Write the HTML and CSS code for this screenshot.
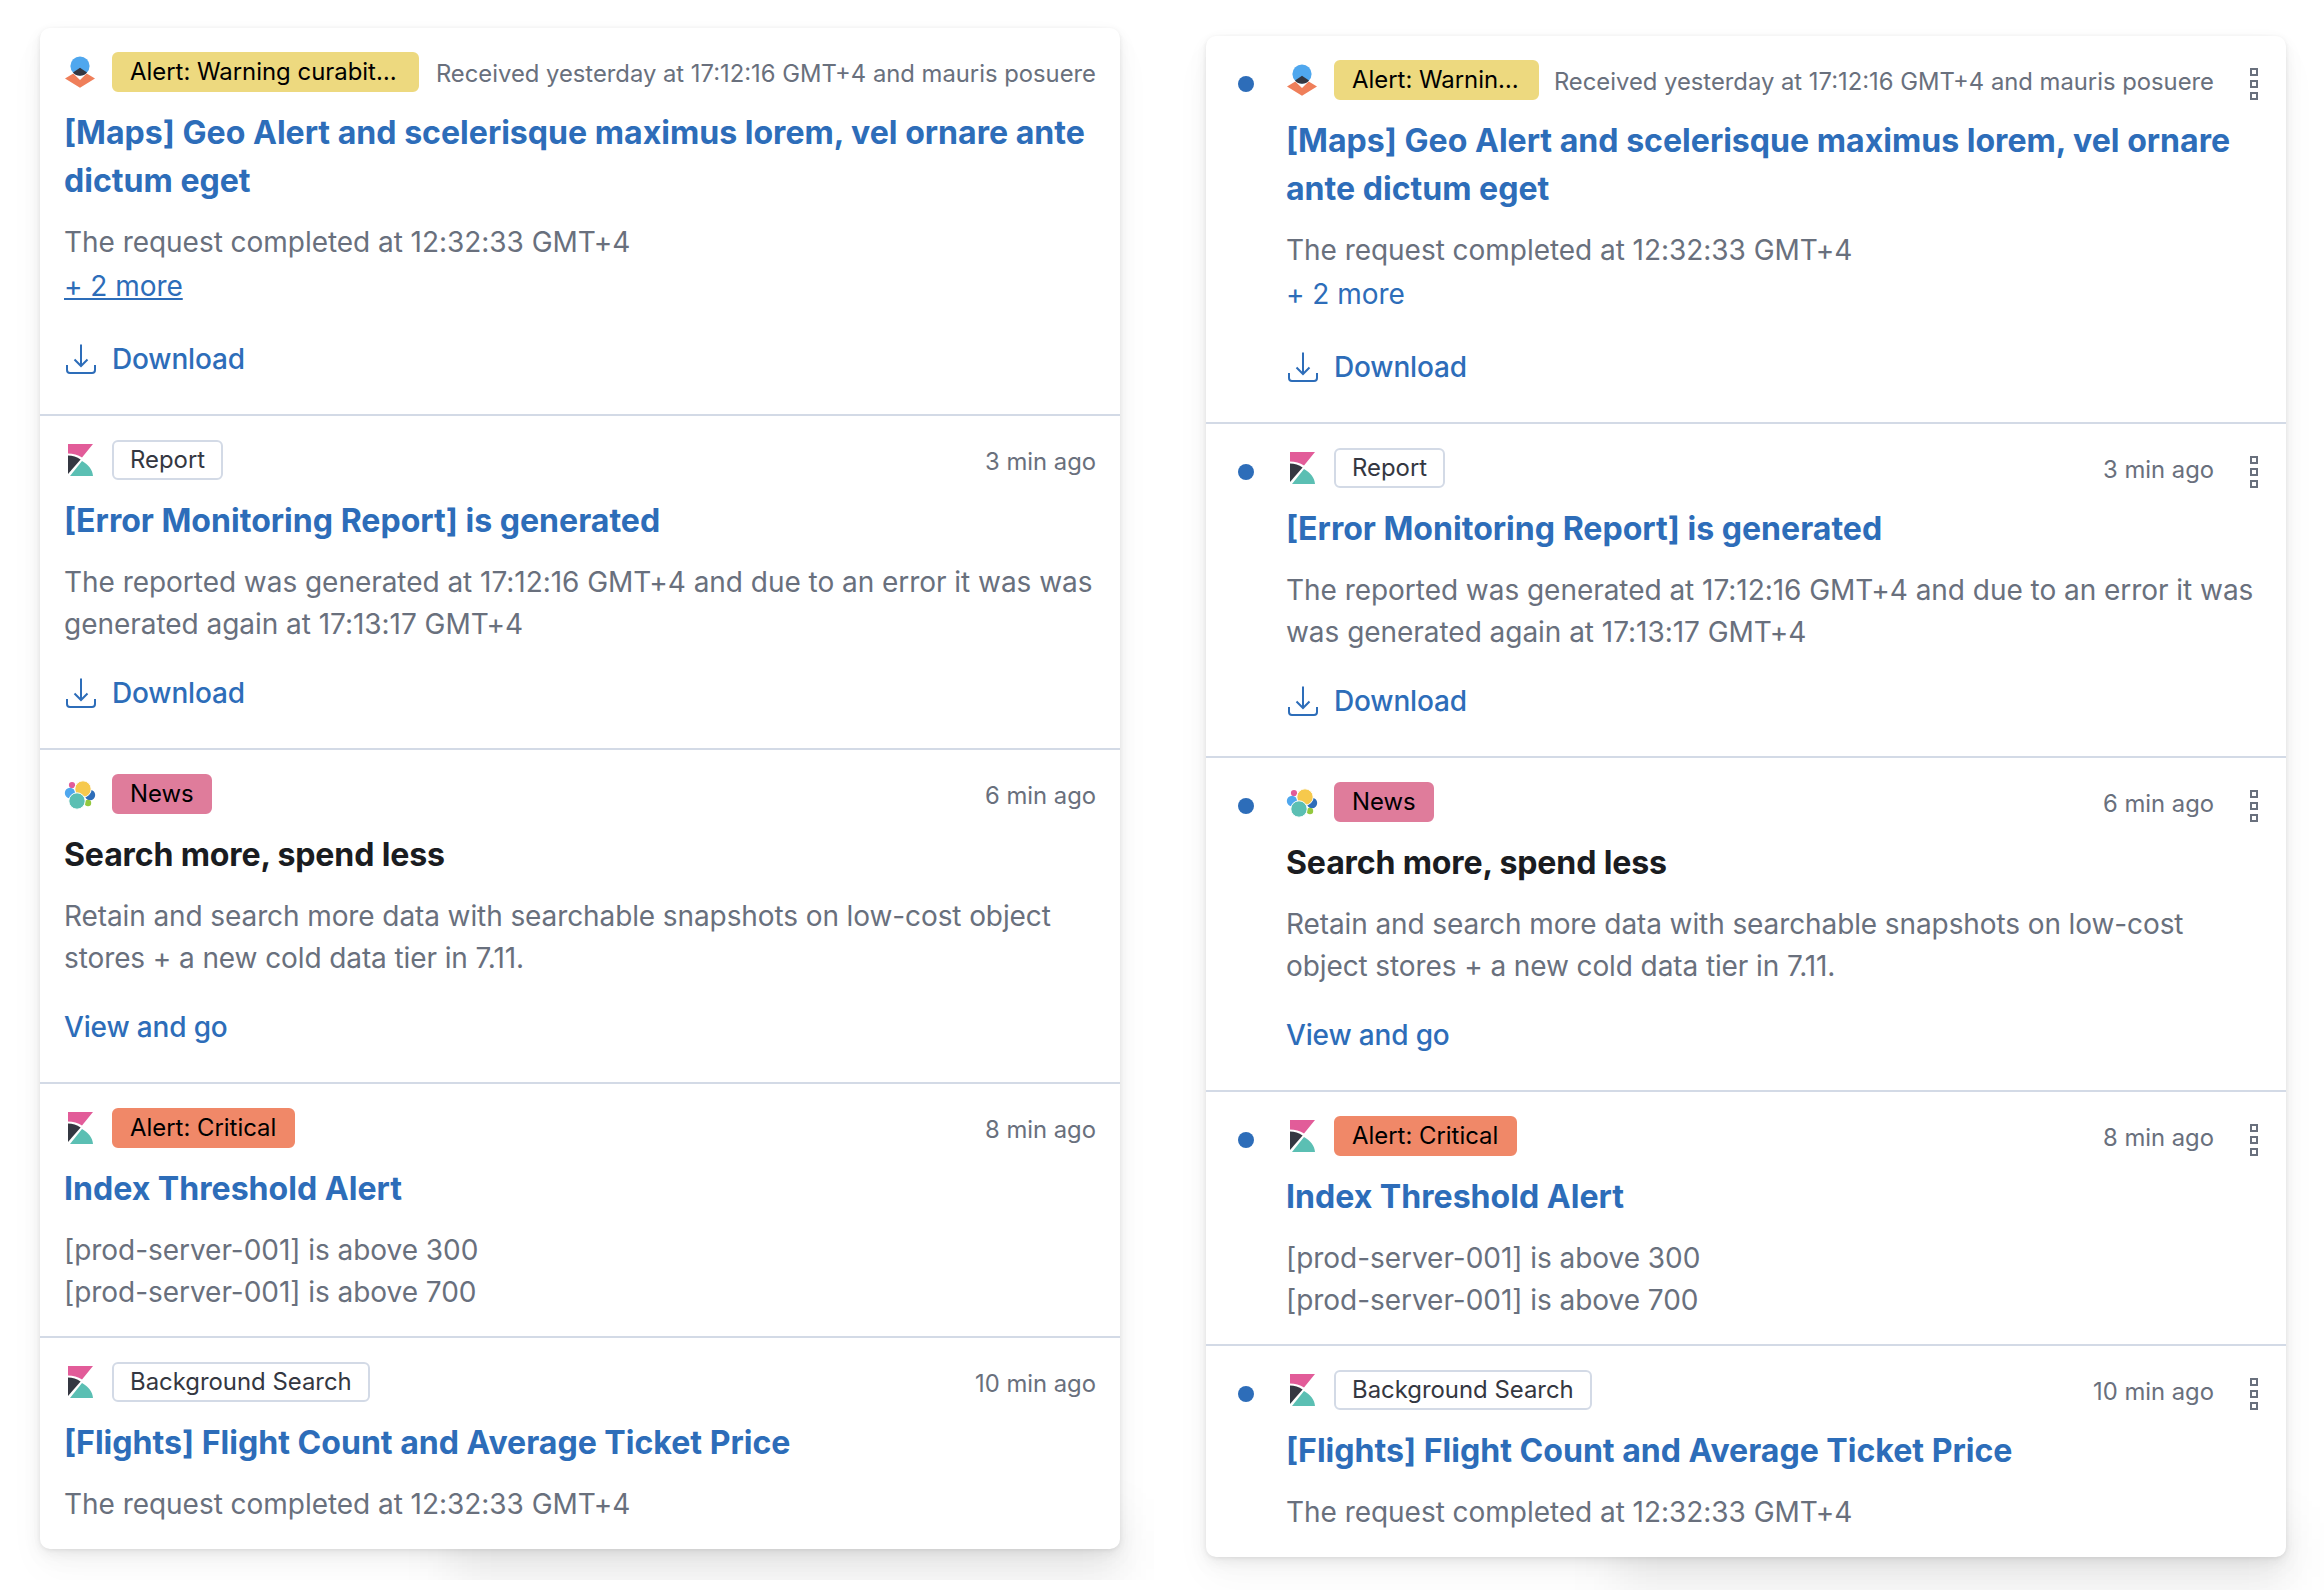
FILE: index.html
```html
<!DOCTYPE html>
<html lang="en">
<head>
<meta charset="utf-8">
<title>Notifications</title>
<link rel="stylesheet" href="styles.css">
</head>
<body>
<svg class="defs" width="0" height="0" aria-hidden="true">
  <defs>
    <symbol id="logo-maps" viewBox="0 0 32 40">
      <circle cx="16" cy="14" r="9.6" fill="#4fa7ee"/>
      <path d="M16 15.8 9 20.4C10.8 22.6 13.2 23.7 16 23.7S21.2 22.6 23 20.4Z" fill="#343741"/>
      <path d="M9.3 21.4 16 28 22.7 21.4 31 26.4 16 35.8 1 26.4Z" fill="#ef7f5a"/>
    </symbol>
    <symbol id="logo-kibana" viewBox="0 0 32 40">
      <path d="M4 4H29L18 17.5C14 15 9 13.5 4 13.5Z" fill="#e25c99"/>
      <path d="M4 15.5C8.5 15.5 13 16.8 16.6 19.5L4 34Z" fill="#343741"/>
      <path d="M6 36 18 21C24.500 24.500 28.500 30 29 36Z" fill="#5bbfb3"/>
    </symbol>
    <symbol id="logo-elastic" viewBox="0 0 32 40">
      <circle cx="8" cy="11" r="3.100" fill="#e25c99"/>
      <circle cx="6" cy="19" r="5.200" fill="#4fa7ee"/>
      <circle cx="26" cy="21" r="5.200" fill="#2d6db9"/>
      <circle cx="24" cy="29" r="3.200" fill="#93c83e"/>
      <circle cx="19" cy="15" r="8.200" fill="#f6c94c" stroke="#fff"/>
      <circle cx="13" cy="27" r="8.200" fill="#5bbfb3" stroke="#fff"/>
    </symbol>
    <symbol id="icon-download" viewBox="0 0 32 32">
      <path d="M17 1.500V23M10.500 16.500 17 23l6.500-6.500M3 22v5a3 3 0 0 0 3 3h22a3 3 0 0 0 3-3v-5" fill="none" stroke="currentColor" stroke-width="2"/>
    </symbol>
    <symbol id="icon-more" viewBox="0 0 8 32">
      <path d="M1 1h6v6H1zM1 13h6v6H1zM1 25h6v6H1z" fill="none" stroke="currentColor" stroke-width="2"/>
    </symbol>
  </defs>
</svg>

<main class="stage">
  <section class="panel panel--plain">
    <div class="card">
      <article class="item item--tall">
        <div class="item__main">
          <header class="item__head">
            <svg class="logo"><use href="#logo-maps"/></svg>
            <span class="badge badge--warning">Alert: Warning curabit…</span>
            <span class="time">Received yesterday at 17:12:16 GMT+4 and mauris posuere</span>
          </header>
          <h3 class="title"><a class="title__link">[Maps] Geo Alert and scelerisque maximus lorem, vel ornare ante dictum eget</a></h3>
          <p class="body">The request completed at 12:32:33 GMT+4</p>
          <a class="more more--underlined">+ 2 more</a>
          <a class="action"><svg class="action__icon"><use href="#icon-download"/></svg>Download</a>
        </div>
      </article>
      <article class="item">
        <div class="item__main">
          <header class="item__head">
            <svg class="logo"><use href="#logo-kibana"/></svg>
            <span class="badge badge--hollow">Report</span>
            <span class="time">3 min ago</span>
          </header>
          <h3 class="title"><a class="title__link">[Error Monitoring Report] is generated</a></h3>
          <p class="body">The reported was generated at 17:12:16 GMT+4 and due to an error it was was generated again at 17:13:17 GMT+4</p>
          <a class="action"><svg class="action__icon"><use href="#icon-download"/></svg>Download</a>
        </div>
      </article>
      <article class="item">
        <div class="item__main">
          <header class="item__head">
            <svg class="logo"><use href="#logo-elastic"/></svg>
            <span class="badge badge--news">News</span>
            <span class="time">6 min ago</span>
          </header>
          <h3 class="title title--dark">Search more, spend less</h3>
          <p class="body body--tight">Retain and search more data with searchable snapshots on low-cost object stores + a new cold data tier in 7.11.</p>
          <a class="action">View and go</a>
        </div>
      </article>
      <article class="item item--short">
        <div class="item__main">
          <header class="item__head">
            <svg class="logo"><use href="#logo-kibana"/></svg>
            <span class="badge badge--critical">Alert: Critical</span>
            <span class="time">8 min ago</span>
          </header>
          <h3 class="title"><a class="title__link">Index Threshold Alert</a></h3>
          <p class="body">[prod-server-001] is above 300<br>[prod-server-001] is above 700</p>
        </div>
      </article>
      <article class="item item--short item--last">
        <div class="item__main">
          <header class="item__head">
            <svg class="logo"><use href="#logo-kibana"/></svg>
            <span class="badge badge--hollow">Background Search</span>
            <span class="time">10 min ago</span>
          </header>
          <h3 class="title"><a class="title__link">[Flights] Flight Count and Average Ticket Price</a></h3>
          <p class="body">The request completed at 12:32:33 GMT+4</p>
        </div>
      </article>
    </div>
  </section>

  <section class="panel panel--unread">
    <div class="card">
      <article class="item item--tall">
        <span class="dot"></span>
        <div class="item__main">
          <header class="item__head">
            <svg class="logo"><use href="#logo-maps"/></svg>
            <span class="badge badge--warning">Alert: Warnin…</span>
            <span class="time">Received yesterday at 17:12:16 GMT+4 and mauris posuere</span>
            <svg class="kebab"><use href="#icon-more"/></svg>
          </header>
          <h3 class="title"><a class="title__link">[Maps] Geo Alert and scelerisque maximus lorem, vel ornare ante dictum eget</a></h3>
          <p class="body">The request completed at 12:32:33 GMT+4</p>
          <a class="more">+ 2 more</a>
          <a class="action"><svg class="action__icon"><use href="#icon-download"/></svg>Download</a>
        </div>
      </article>
      <article class="item">
        <span class="dot"></span>
        <div class="item__main">
          <header class="item__head">
            <svg class="logo"><use href="#logo-kibana"/></svg>
            <span class="badge badge--hollow">Report</span>
            <span class="time">3 min ago</span>
            <svg class="kebab"><use href="#icon-more"/></svg>
          </header>
          <h3 class="title"><a class="title__link">[Error Monitoring Report] is generated</a></h3>
          <p class="body">The reported was generated at 17:12:16 GMT+4 and due to an error it was was generated again at 17:13:17 GMT+4</p>
          <a class="action"><svg class="action__icon"><use href="#icon-download"/></svg>Download</a>
        </div>
      </article>
      <article class="item">
        <span class="dot"></span>
        <div class="item__main">
          <header class="item__head">
            <svg class="logo"><use href="#logo-elastic"/></svg>
            <span class="badge badge--news">News</span>
            <span class="time">6 min ago</span>
            <svg class="kebab"><use href="#icon-more"/></svg>
          </header>
          <h3 class="title title--dark">Search more, spend less</h3>
          <p class="body body--tight">Retain and search more data with searchable snapshots on low-cost object stores + a new cold data tier in 7.11.</p>
          <a class="action">View and go</a>
        </div>
      </article>
      <article class="item item--short">
        <span class="dot"></span>
        <div class="item__main">
          <header class="item__head">
            <svg class="logo"><use href="#logo-kibana"/></svg>
            <span class="badge badge--critical">Alert: Critical</span>
            <span class="time">8 min ago</span>
            <svg class="kebab"><use href="#icon-more"/></svg>
          </header>
          <h3 class="title"><a class="title__link">Index Threshold Alert</a></h3>
          <p class="body">[prod-server-001] is above 300<br>[prod-server-001] is above 700</p>
        </div>
      </article>
      <article class="item item--short item--last">
        <span class="dot"></span>
        <div class="item__main">
          <header class="item__head">
            <svg class="logo"><use href="#logo-kibana"/></svg>
            <span class="badge badge--hollow">Background Search</span>
            <span class="time">10 min ago</span>
            <svg class="kebab"><use href="#icon-more"/></svg>
          </header>
          <h3 class="title"><a class="title__link">[Flights] Flight Count and Average Ticket Price</a></h3>
          <p class="body">The request completed at 12:32:33 GMT+4</p>
        </div>
      </article>
    </div>
  </section>
</main>
</body>
</html>
```
FILE: styles.css
```css
* { box-sizing: border-box; }

html, body {
  margin: 0;
  height: 100%;
  background: #fff;
}

body {
  overflow: hidden;
  font-family: Inter, "Liberation Sans", sans-serif;
  font-size: 28px;
  color: #69707d;
}

.defs { position: absolute; }

.stage {
  display: flex;
  align-items: flex-start;
  height: 1590px;
}

.panel {
  position: relative;
  z-index: 0;
  flex: none;
}

.panel--plain {
  width: 1154px;
  height: 1580px;
  padding: 28px 0 0 40px;
  overflow: hidden;
}

.panel--unread {
  width: 1132px;
  padding: 36px 0 0 52px;
}

.card {
  position: relative;
  width: 1080px;
  height: 1521px;
  background: #fff;
  border-radius: 10px;
  box-shadow:
    0 1px 4px rgba(0, 0, 0, .07),
    0 4px 12px rgba(0, 0, 0, .05),
    0 8px 24px rgba(0, 0, 0, .04),
    0 20px 40px rgba(0, 0, 0, .03);
}

.card::after {
  content: "";
  position: absolute;
  z-index: -1;
  left: 410px;
  right: -4px;
  bottom: -36px;
  height: 70px;
  background: rgba(0, 0, 0, .06);
  filter: blur(24px);
}

.item {
  display: flex;
  padding: 24px 24px 31px 24px;
  border-bottom: 2px solid #d3dae6;
}

.panel--unread .item { padding-left: 32px; }

.item--short,
.panel--unread .item--short { padding-bottom: 23px; }

.item--last { border-bottom: 0; }

.dot {
  flex: none;
  width: 16px;
  height: 16px;
  margin: 16px 32px 0 0;
  border-radius: 50%;
  background: #2d6db9;
}

.item__main {
  flex: 1;
  min-width: 0;
}

.item__head {
  display: flex;
  align-items: center;
  height: 40px;
}

.logo {
  flex: none;
  width: 32px;
  height: 40px;
  margin-right: 16px;
}

.badge {
  flex: none;
  height: 40px;
  padding: 0 16px;
  border: 2px solid transparent;
  border-radius: 6px;
  font-size: 23.9px;
  line-height: 36px;
  color: #000;
  white-space: nowrap;
}

.badge--warning { background: #edd97f; border-color: #edd97f; padding-right: 18px; }
.panel--plain .badge--warning { padding-right: 20px; }
.badge--news { background: #df7c9b; border-color: #df7c9b; }
.badge--critical { background: #f08868; border-color: #f08868; padding-right: 17px; }
.badge--hollow { background: #fff; border-color: #d3dae6; color: #343741; }

.time {
  flex: none;
  margin-left: auto;
  padding-top: 3px;
  font-size: 23.8px;
  line-height: 40px;
  white-space: nowrap;
}

.kebab {
  flex: none;
  width: 8px;
  height: 32px;
  margin: 8px 4px 0 36px;
  color: #69707d;
}

.title {
  margin: 17px 0 16px;
  font-size: 32.1px;
  line-height: 48px;
  font-weight: 700;
  color: #1a1c21;
}

.title--dark {
  letter-spacing: -.15px;
}

.title__link { color: #2d6db9; }

.body {
  margin: 0;
  line-height: 42px;
  letter-spacing: -.04px;
}

.body--tight { letter-spacing: -.1px; }

.more {
  display: block;
  margin-top: 2px;
  line-height: 42px;
  letter-spacing: -.04px;
  color: #2d6db9;
}

.more--underlined { text-decoration: underline; }

.action {
  display: flex;
  align-items: center;
  gap: 16px;
  height: 48px;
  margin-top: 24px;
  font-weight: 500;
  letter-spacing: -.16px;
  color: #2d6db9;
}

.more + .action { margin-top: 28px; }

.action__icon {
  flex: none;
  width: 32px;
  height: 32px;
}
```
